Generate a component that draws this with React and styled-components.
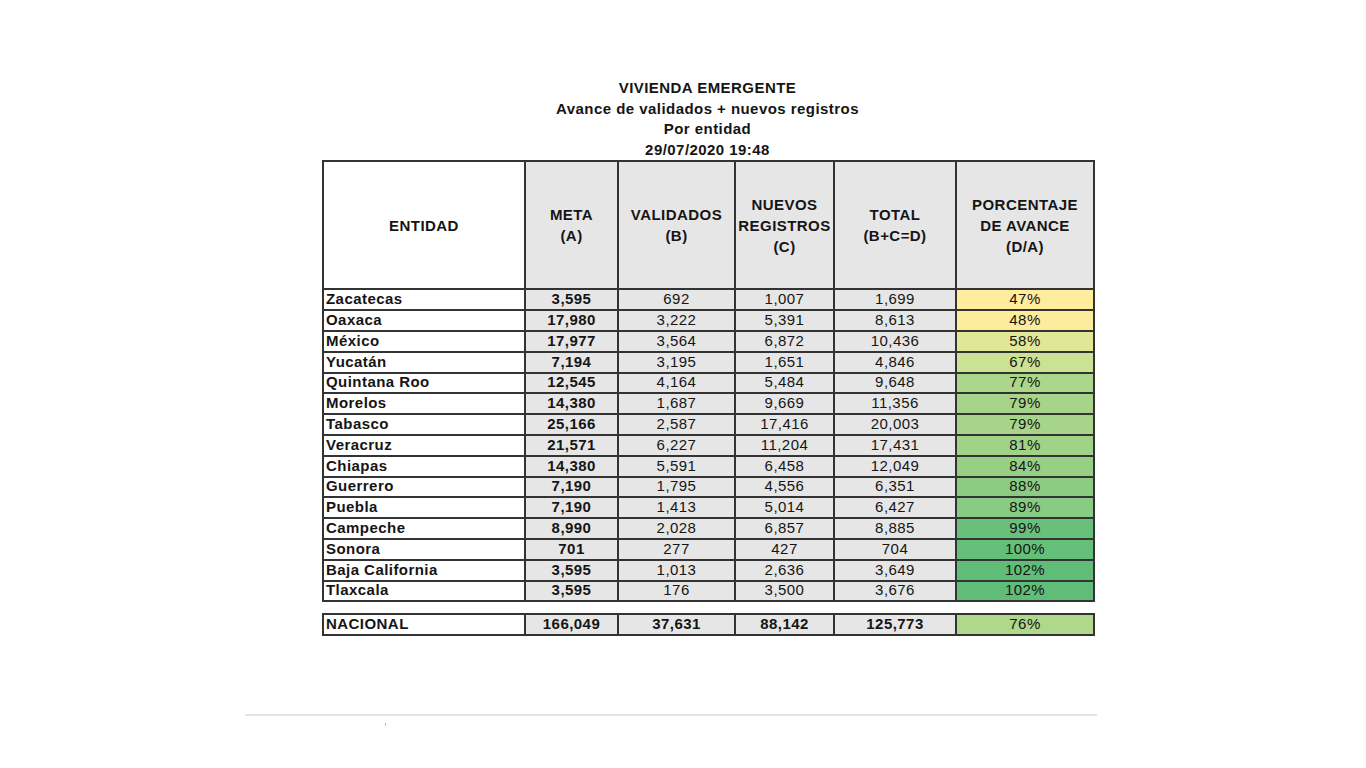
import React from "react";
import styled, { createGlobalStyle } from "styled-components";

const GlobalStyle = createGlobalStyle`
  html, body {
    margin: 0;
    padding: 0;
    background: #ffffff;
  }
  body {
    font-family: "Liberation Sans", Arial, sans-serif;
    color: #151515;
  }
`;

const rows = [
  ["Zacatecas", 3595, 692, 1007, 1699, 47],
  ["Oaxaca", 17980, 3222, 5391, 8613, 48],
  ["México", 17977, 3564, 6872, 10436, 58],
  ["Yucatán", 7194, 3195, 1651, 4846, 67],
  ["Quintana Roo", 12545, 4164, 5484, 9648, 77],
  ["Morelos", 14380, 1687, 9669, 11356, 79],
  ["Tabasco", 25166, 2587, 17416, 20003, 79],
  ["Veracruz", 21571, 6227, 11204, 17431, 81],
  ["Chiapas", 14380, 5591, 6458, 12049, 84],
  ["Guerrero", 7190, 1795, 4556, 6351, 88],
  ["Puebla", 7190, 1413, 5014, 6427, 89],
  ["Campeche", 8990, 2028, 6857, 8885, 99],
  ["Sonora", 701, 277, 427, 704, 100],
  ["Baja California", 3595, 1013, 2636, 3649, 102],
  ["Tlaxcala", 3595, 176, 3500, 3676, 102],
];

const colWidths = [202, 93, 117, 99, 122, 138];

const fmt = (n) => n.toLocaleString("en-US");

// yellow -> green scale, like the spreadsheet's conditional format
const scaleColor = (p) => {
  const lo = [255, 236, 156];
  const mid = [203, 226, 146];
  const hi = [96, 189, 120];
  let a, b, t;
  if (p <= 67) {
    a = lo; b = mid; t = (p - 47) / 20;
  } else {
    a = mid; b = hi; t = (p - 67) / 35;
  }
  t = Math.max(0, Math.min(1, t));
  const c = a.map((v, i) => Math.round(v + (b[i] - v) * t));
  return `rgb(${c[0]}, ${c[1]}, ${c[2]})`;
};

const Page = styled.div`
  padding-top: 78px;
  padding-left: 245px;
`;

const Sheet = styled.div`
  width: 852px;
  display: flex;
  flex-direction: column;
`;

const Content = styled.div`
  padding-left: 77px;
  width: 771px;
`;

const Title = styled.div`
  font-size: 15px;
  letter-spacing: 0.45px;
  font-weight: bold;
  line-height: 20.5px;
  text-align: center;
`;

const Table = styled.table`
  border-collapse: collapse;
  table-layout: fixed;
  width: 771px;
  margin-top: ${({ $gap }) => $gap || 0}px;
  font-size: 15px;
  letter-spacing: 0.45px;
`;

const HeadCell = styled.th`
  border: 2px solid #333;
  background: ${({ $white }) => ($white ? "#ffffff" : "#e7e6e6")};
  height: 126px;
  padding: 0;
  font-weight: bold;
  line-height: 21px;
  text-align: center;
  vertical-align: middle;
`;

const Row = styled.tr`
  height: ${({ $h }) => $h}px;
`;

const Cell = styled.td`
  border: 2px solid #333;
  background: ${({ $bg }) => $bg || "#e7e6e6"};
  padding: 0 2px 2px;
  line-height: 16px;
  font-weight: ${({ $bold }) => ($bold ? "bold" : "normal")};
  text-align: ${({ $left }) => ($left ? "left" : "center")};
  white-space: nowrap;
`;

const Footer = styled.div`
  margin-top: 78px;
  height: 2px;
  background: #e3e3e6;
`;

const Tick = styled.div`
  margin-top: 7px;
  margin-left: 140px;
  width: 1px;
  height: 3px;
  background: #b9b9b9;
`;

const Cols = () => (
  <colgroup>
    {colWidths.map((w, i) => (
      <col key={i} style={{ width: w }} />
    ))}
  </colgroup>
);

export default function App() {
  return (
    <Page>
      <GlobalStyle />
      <Sheet>
        <Content>
          <Title>
            VIVIENDA EMERGENTE
            <br />
            Avance de validados + nuevos registros
            <br />
            Por entidad
            <br />
            29/07/2020 19:48
          </Title>
          <Table>
            <Cols />
            <thead>
              <tr>
                <HeadCell $white>ENTIDAD</HeadCell>
                <HeadCell>
                  META
                  <br />
                  (A)
                </HeadCell>
                <HeadCell>
                  VALIDADOS
                  <br />
                  (B)
                </HeadCell>
                <HeadCell>
                  NUEVOS
                  <br />
                  REGISTROS
                  <br />
                  (C)
                </HeadCell>
                <HeadCell>
                  TOTAL
                  <br />
                  (B+C=D)
                </HeadCell>
                <HeadCell>
                  PORCENTAJE
                  <br />
                  DE AVANCE
                  <br />
                  (D/A)
                </HeadCell>
              </tr>
            </thead>
            <tbody>
              {rows.map(([name, meta, val, nue, tot, pct], i) => (
                <Row key={name} $h={i % 5 === 4 ? 20 : 21}>
                  <Cell $left $bold $bg="#ffffff">
                    {name}
                  </Cell>
                  <Cell $bold>{fmt(meta)}</Cell>
                  <Cell>{fmt(val)}</Cell>
                  <Cell>{fmt(nue)}</Cell>
                  <Cell>{fmt(tot)}</Cell>
                  <Cell $bg={scaleColor(pct)}>{pct}%</Cell>
                </Row>
              ))}
            </tbody>
          </Table>
          <Table $gap={11}>
            <Cols />
            <tbody>
              <Row $h={21}>
                <Cell $left $bold $bg="#ffffff">
                  NACIONAL
                </Cell>
                <Cell $bold>{fmt(166049)}</Cell>
                <Cell $bold>{fmt(37631)}</Cell>
                <Cell $bold>{fmt(88142)}</Cell>
                <Cell $bold>{fmt(125773)}</Cell>
                <Cell $bg={scaleColor(76)}>76%</Cell>
              </Row>
            </tbody>
          </Table>
        </Content>
        <Footer />
        <Tick />
      </Sheet>
    </Page>
  );
}
